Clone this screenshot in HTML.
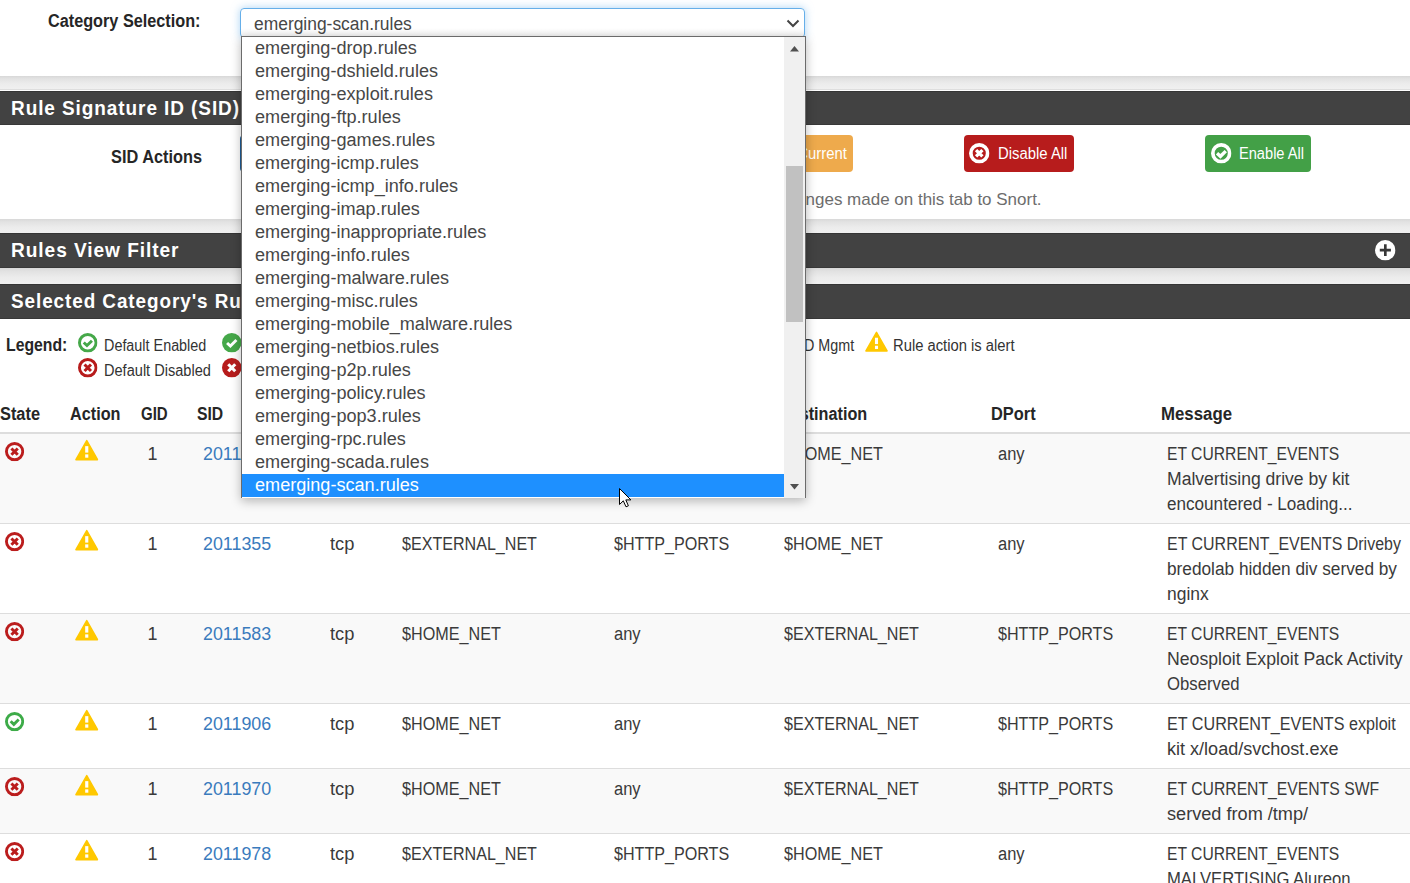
<!DOCTYPE html>
<html><head><meta charset="utf-8">
<style>
*{box-sizing:border-box}
html,body{margin:0;padding:0}
body{width:1410px;height:883px;overflow:hidden;position:relative;background:#fff;font-family:"Liberation Sans",sans-serif}
.a{position:absolute}
.t{position:absolute;white-space:nowrap;transform-origin:0 0;font-family:"Liberation Sans",sans-serif}
.band{position:absolute;left:0;width:1410px;background:linear-gradient(#d8d8d8,#e2e2e2 20%,#ececec 60%,#f0f0f0)}
.ph{position:absolute;left:0;width:1410px;background:#424242;border-top:1px solid #353535;border-bottom:1px solid #383838}
.btn{position:absolute;top:135px;height:37px;border-radius:4px}
svg.i{position:absolute;overflow:visible}
.rowl{position:absolute;left:0;width:1410px;height:1px;background:#ddd}
</style></head><body>
<svg width="0" height="0" style="position:absolute">
<defs>
  <symbol id="cko" viewBox="0 0 20 20"><circle cx="10" cy="10" r="8.5" fill="none" stroke="currentColor" stroke-width="3"/><path d="M5.9 9.7 L9.2 12.9 L14.3 7.9" fill="none" stroke="currentColor" stroke-width="3"/></symbol>
  <symbol id="xo" viewBox="0 0 20 20"><circle cx="10" cy="10" r="8.5" fill="none" stroke="currentColor" stroke-width="3"/><path d="M6.7 6.7 L13.3 13.3 M13.3 6.7 L6.7 13.3" fill="none" stroke="currentColor" stroke-width="3.1"/></symbol>
  <symbol id="bxo" viewBox="0 0 20 20"><circle cx="10" cy="10" r="8.2" fill="none" stroke="#fff" stroke-width="3.6"/><path d="M6.9 6.9 L13.1 13.1 M13.1 6.9 L6.9 13.1" fill="none" stroke="#fff" stroke-width="3.2"/></symbol>
  <symbol id="bcko" viewBox="0 0 20 20"><circle cx="10" cy="10" r="8.2" fill="none" stroke="#fff" stroke-width="3.6"/><path d="M5.9 10.0 L9.2 13.0 L14.4 7.9" fill="none" stroke="#fff" stroke-width="3.3"/></symbol>
  <symbol id="cks" viewBox="0 0 20 20"><circle cx="10" cy="10" r="10" fill="currentColor"/><path d="M5.2 10.2 L8.6 13.4 L14.8 7.2" fill="none" stroke="#fff" stroke-width="3"/></symbol>
  <symbol id="xs" viewBox="0 0 20 20"><circle cx="10" cy="10" r="10" fill="currentColor"/><path d="M6.4 6.4 L13.6 13.6 M13.6 6.4 L6.4 13.6" fill="none" stroke="#fff" stroke-width="3.2"/></symbol>
  <symbol id="warn" viewBox="0 0 24 22"><path d="M12 1.2 L23 20.6 L1 20.6 Z" fill="#ffc800" stroke="#ffc800" stroke-width="1.6" stroke-linejoin="round"/><rect x="10.4" y="6.8" width="3.2" height="6.6" fill="#fff"/><rect x="10.4" y="15.2" width="3.2" height="3.4" fill="#fff"/></symbol>
  <symbol id="plus" viewBox="0 0 21 21"><circle cx="10.5" cy="10.5" r="10.5" fill="#fff"/><path d="M10.6 4.4 V16.4 M4.9 10.4 H16.3" stroke="#383838" stroke-width="2.7"/></symbol>
</defs></svg>

<!-- bands & headings -->
<div class="band" style="top:76px;height:13px"></div>
<div class="a" style="left:0;top:89px;width:1410px;height:1px;background:#dedede"></div>
<div class="ph" style="top:91px;height:34px"></div>
<div class="band" style="top:219px;height:14px"></div>
<div class="ph" style="top:233px;height:35px"></div>
<div class="band" style="top:268px;height:16px"></div>
<div class="ph" style="top:284px;height:35px"></div>

<!-- buttons -->
<div class="btn" style="left:240px;width:150px;background:#1e5f9a"></div>
<div class="btn" style="left:700px;width:153px;background:#eeaa4c"></div>
<div class="btn" style="left:964px;width:110px;background:#b71c1c"></div>
<div class="btn" style="left:1205px;width:106px;background:#43a047"></div>
<svg class="i" style="left:969.4px;top:142.8px;width:20.5px;height:20.5px"><use href="#bxo"/></svg>
<svg class="i" style="left:1210.6px;top:142.8px;width:20.5px;height:20.5px"><use href="#bcko"/></svg>
<svg class="i" style="left:1375px;top:239.6px;width:20.5px;height:20.5px"><use href="#plus"/></svg>

<!-- legend icons -->
<svg class="i" style="left:78px;top:333px;width:19.5px;height:19.5px;color:#45a849"><use href="#cko"/></svg>
<svg class="i" style="left:78px;top:358px;width:19.5px;height:19.5px;color:#b71c1c"><use href="#xo"/></svg>
<svg class="i" style="left:221.6px;top:333px;width:19.5px;height:19.5px;color:#45a849"><use href="#cks"/></svg>
<svg class="i" style="left:221.6px;top:358px;width:19.5px;height:19.5px;color:#b71c1c"><use href="#xs"/></svg>
<svg class="i" style="left:864.5px;top:331px;width:23px;height:21.5px"><use href="#warn"/></svg>

<!-- table -->
<div class="a" style="left:0;top:432px;width:1410px;height:2px;background:#ddd"></div>
<div class="a" style="left:0;top:434px;width:1410px;height:90px;background:#f9f9f9"></div>
<svg class="i" style="left:4.9px;top:441.8px;width:19.2px;height:19.2px;color:#bb1d1d"><use href="#xo"/></svg>
<svg class="i" style="left:75px;top:439.3px;width:23.5px;height:22.5px"><use href="#warn"/></svg>
<div class="a" style="left:0;top:524px;width:1410px;height:90px;background:#fff"></div>
<div class="rowl" style="top:523px"></div>
<svg class="i" style="left:4.9px;top:531.8px;width:19.2px;height:19.2px;color:#bb1d1d"><use href="#xo"/></svg>
<svg class="i" style="left:75px;top:529.3px;width:23.5px;height:22.5px"><use href="#warn"/></svg>
<div class="a" style="left:0;top:614px;width:1410px;height:90px;background:#f9f9f9"></div>
<div class="rowl" style="top:613px"></div>
<svg class="i" style="left:4.9px;top:621.8px;width:19.2px;height:19.2px;color:#bb1d1d"><use href="#xo"/></svg>
<svg class="i" style="left:75px;top:619.3px;width:23.5px;height:22.5px"><use href="#warn"/></svg>
<div class="a" style="left:0;top:704px;width:1410px;height:65px;background:#fff"></div>
<div class="rowl" style="top:703px"></div>
<svg class="i" style="left:4.9px;top:711.8px;width:19.2px;height:19.2px;color:#3dab48"><use href="#cko"/></svg>
<svg class="i" style="left:75px;top:709.3px;width:23.5px;height:22.5px"><use href="#warn"/></svg>
<div class="a" style="left:0;top:769px;width:1410px;height:65px;background:#f9f9f9"></div>
<div class="rowl" style="top:768px"></div>
<svg class="i" style="left:4.9px;top:776.8px;width:19.2px;height:19.2px;color:#bb1d1d"><use href="#xo"/></svg>
<svg class="i" style="left:75px;top:774.3px;width:23.5px;height:22.5px"><use href="#warn"/></svg>
<div class="a" style="left:0;top:834px;width:1410px;height:60px;background:#fff"></div>
<div class="rowl" style="top:833px"></div>
<svg class="i" style="left:4.9px;top:841.8px;width:19.2px;height:19.2px;color:#bb1d1d"><use href="#xo"/></svg>
<svg class="i" style="left:75px;top:839.3px;width:23.5px;height:22.5px"><use href="#warn"/></svg>

<div class="t" style="left:47.60px;top:11.76px;font-size:18px;line-height:18px;font-weight:700;color:#262626;transform:scaleX(0.9021);">Category Selection:</div>
<div class="t" style="left:10.60px;top:97.64px;font-size:20.5px;line-height:20.5px;font-weight:700;color:#fff;letter-spacing:1.0px;transform:scaleX(0.9257);">Rule Signature ID (SID) Management</div>
<div class="t" style="left:111.00px;top:147.76px;font-size:18px;line-height:18px;font-weight:700;color:#262626;transform:scaleX(0.9067);">SID Actions</div>
<div class="t" style="left:997.60px;top:146.15px;font-size:16px;line-height:16px;font-weight:400;color:#fff;transform:scaleX(0.9290);">Disable All</div>
<div class="t" style="left:1239.00px;top:146.15px;font-size:16px;line-height:16px;font-weight:400;color:#fff;transform:scaleX(0.9133);">Enable All</div>
<div class="t" style="left:760.00px;top:146.15px;font-size:16px;line-height:16px;font-weight:400;color:#fff;transform:scaleX(0.9300);">Load Current</div>
<div class="t" style="left:580.03px;top:190.61px;font-size:17px;line-height:17px;font-weight:400;color:#6d6d6d;transform:scaleX(0.9989);">Please remember to save changes made on this tab to Snort.</div>
<div class="t" style="left:10.60px;top:240.14px;font-size:20.5px;line-height:20.5px;font-weight:700;color:#fff;letter-spacing:1.0px;transform:scaleX(0.9325);">Rules View Filter</div>
<div class="t" style="left:10.60px;top:290.64px;font-size:20.5px;line-height:20.5px;font-weight:700;color:#fff;letter-spacing:1.0px;transform:scaleX(0.9222);">Selected Category&#x27;s Rules</div>
<div class="t" style="left:5.70px;top:336.06px;font-size:18px;line-height:18px;font-weight:700;color:#262626;transform:scaleX(0.8757);">Legend:</div>
<div class="t" style="left:103.70px;top:338.09px;font-size:15.6px;line-height:15.6px;font-weight:400;color:#333;transform:scaleX(0.9219);">Default Enabled</div>
<div class="t" style="left:103.70px;top:363.09px;font-size:15.6px;line-height:15.6px;font-weight:400;color:#333;transform:scaleX(0.9343);">Default Disabled</div>
<div class="t" style="left:243.00px;top:338.09px;font-size:15.6px;line-height:15.6px;font-weight:400;color:#333;transform:scaleX(0.9200);">Enabled by user</div>
<div class="t" style="left:243.00px;top:363.09px;font-size:15.6px;line-height:15.6px;font-weight:400;color:#333;transform:scaleX(0.9200);">Disabled by user</div>
<div class="t" style="left:681.76px;top:338.09px;font-size:15.6px;line-height:15.6px;font-weight:400;color:#333;transform:scaleX(0.9200);">Auto-enabled by SID Mgmt</div>
<div class="t" style="left:893.00px;top:338.09px;font-size:15.6px;line-height:15.6px;font-weight:400;color:#333;transform:scaleX(0.9479);">Rule action is alert</div>
<div class="t" style="left:0.00px;top:405.26px;font-size:18px;line-height:18px;font-weight:700;color:#262626;transform:scaleX(0.9088);">State</div>
<div class="t" style="left:69.70px;top:405.26px;font-size:18px;line-height:18px;font-weight:700;color:#262626;transform:scaleX(0.9018);">Action</div>
<div class="t" style="left:141.30px;top:405.26px;font-size:18px;line-height:18px;font-weight:700;color:#262626;transform:scaleX(0.8340);">GID</div>
<div class="t" style="left:196.80px;top:405.26px;font-size:18px;line-height:18px;font-weight:700;color:#262626;transform:scaleX(0.8729);">SID</div>
<div class="t" style="left:330.00px;top:405.26px;font-size:18px;line-height:18px;font-weight:700;color:#262626;transform:scaleX(0.9000);">Proto</div>
<div class="t" style="left:401.00px;top:405.26px;font-size:18px;line-height:18px;font-weight:700;color:#262626;transform:scaleX(0.9000);">Source</div>
<div class="t" style="left:614.00px;top:405.26px;font-size:18px;line-height:18px;font-weight:700;color:#262626;transform:scaleX(0.9000);">SPort</div>
<div class="t" style="left:778.79px;top:405.26px;font-size:18px;line-height:18px;font-weight:700;color:#262626;transform:scaleX(0.9000);">Destination</div>
<div class="t" style="left:991.00px;top:405.26px;font-size:18px;line-height:18px;font-weight:700;color:#262626;transform:scaleX(0.9102);">DPort</div>
<div class="t" style="left:1161.00px;top:405.26px;font-size:18px;line-height:18px;font-weight:700;color:#262626;transform:scaleX(0.9336);">Message</div>
<div class="t" style="left:147.60px;top:445.26px;font-size:18px;line-height:18px;font-weight:400;color:#3a3a3a;">1</div>
<div class="t" style="left:203.40px;top:445.26px;font-size:18px;line-height:18px;font-weight:400;color:#3a7bbd;transform:scaleX(0.9920);">2011347</div>
<div class="t" style="left:330.00px;top:445.26px;font-size:18px;line-height:18px;font-weight:400;color:#3a3a3a;transform:scaleX(1.0167);">tcp</div>
<div class="t" style="left:401.60px;top:445.26px;font-size:18px;line-height:18px;font-weight:400;color:#3a3a3a;transform:scaleX(0.8934);">$EXTERNAL_NET</div>
<div class="t" style="left:614.40px;top:445.26px;font-size:18px;line-height:18px;font-weight:400;color:#3a3a3a;transform:scaleX(0.8951);">$HTTP_PORTS</div>
<div class="t" style="left:784.40px;top:445.26px;font-size:18px;line-height:18px;font-weight:400;color:#3a3a3a;transform:scaleX(0.8982);">$HOME_NET</div>
<div class="t" style="left:997.60px;top:445.26px;font-size:18px;line-height:18px;font-weight:400;color:#3a3a3a;transform:scaleX(0.9172);">any</div>
<div class="t" style="left:1167.30px;top:445.26px;font-size:18px;line-height:18px;font-weight:400;color:#3a3a3a;transform:scaleX(0.8715);">ET CURRENT_EVENTS</div>
<div class="t" style="left:1167.30px;top:470.26px;font-size:18px;line-height:18px;font-weight:400;color:#3a3a3a;transform:scaleX(0.9756);">Malvertising drive by kit</div>
<div class="t" style="left:1167.30px;top:495.26px;font-size:18px;line-height:18px;font-weight:400;color:#3a3a3a;transform:scaleX(0.9505);">encountered - Loading...</div>
<div class="t" style="left:147.60px;top:535.26px;font-size:18px;line-height:18px;font-weight:400;color:#3a3a3a;">1</div>
<div class="t" style="left:203.40px;top:535.26px;font-size:18px;line-height:18px;font-weight:400;color:#3a7bbd;transform:scaleX(0.9920);">2011355</div>
<div class="t" style="left:330.00px;top:535.26px;font-size:18px;line-height:18px;font-weight:400;color:#3a3a3a;transform:scaleX(1.0167);">tcp</div>
<div class="t" style="left:401.60px;top:535.26px;font-size:18px;line-height:18px;font-weight:400;color:#3a3a3a;transform:scaleX(0.8934);">$EXTERNAL_NET</div>
<div class="t" style="left:614.40px;top:535.26px;font-size:18px;line-height:18px;font-weight:400;color:#3a3a3a;transform:scaleX(0.8951);">$HTTP_PORTS</div>
<div class="t" style="left:784.40px;top:535.26px;font-size:18px;line-height:18px;font-weight:400;color:#3a3a3a;transform:scaleX(0.8982);">$HOME_NET</div>
<div class="t" style="left:997.60px;top:535.26px;font-size:18px;line-height:18px;font-weight:400;color:#3a3a3a;transform:scaleX(0.9172);">any</div>
<div class="t" style="left:1167.30px;top:535.26px;font-size:18px;line-height:18px;font-weight:400;color:#3a3a3a;transform:scaleX(0.8869);">ET CURRENT_EVENTS Driveby</div>
<div class="t" style="left:1167.30px;top:560.26px;font-size:18px;line-height:18px;font-weight:400;color:#3a3a3a;transform:scaleX(0.9576);">bredolab hidden div served by</div>
<div class="t" style="left:1167.30px;top:585.26px;font-size:18px;line-height:18px;font-weight:400;color:#3a3a3a;transform:scaleX(0.9691);">nginx</div>
<div class="t" style="left:147.60px;top:625.26px;font-size:18px;line-height:18px;font-weight:400;color:#3a3a3a;">1</div>
<div class="t" style="left:203.40px;top:625.26px;font-size:18px;line-height:18px;font-weight:400;color:#3a7bbd;transform:scaleX(0.9920);">2011583</div>
<div class="t" style="left:330.00px;top:625.26px;font-size:18px;line-height:18px;font-weight:400;color:#3a3a3a;transform:scaleX(1.0167);">tcp</div>
<div class="t" style="left:401.60px;top:625.26px;font-size:18px;line-height:18px;font-weight:400;color:#3a3a3a;transform:scaleX(0.8982);">$HOME_NET</div>
<div class="t" style="left:614.40px;top:625.26px;font-size:18px;line-height:18px;font-weight:400;color:#3a3a3a;transform:scaleX(0.9172);">any</div>
<div class="t" style="left:784.40px;top:625.26px;font-size:18px;line-height:18px;font-weight:400;color:#3a3a3a;transform:scaleX(0.8934);">$EXTERNAL_NET</div>
<div class="t" style="left:997.60px;top:625.26px;font-size:18px;line-height:18px;font-weight:400;color:#3a3a3a;transform:scaleX(0.8951);">$HTTP_PORTS</div>
<div class="t" style="left:1167.30px;top:625.26px;font-size:18px;line-height:18px;font-weight:400;color:#3a3a3a;transform:scaleX(0.8715);">ET CURRENT_EVENTS</div>
<div class="t" style="left:1167.30px;top:650.26px;font-size:18px;line-height:18px;font-weight:400;color:#3a3a3a;transform:scaleX(0.9816);">Neosploit Exploit Pack Activity</div>
<div class="t" style="left:1167.30px;top:675.26px;font-size:18px;line-height:18px;font-weight:400;color:#3a3a3a;transform:scaleX(0.9289);">Observed</div>
<div class="t" style="left:147.60px;top:715.26px;font-size:18px;line-height:18px;font-weight:400;color:#3a3a3a;">1</div>
<div class="t" style="left:203.40px;top:715.26px;font-size:18px;line-height:18px;font-weight:400;color:#3a7bbd;transform:scaleX(0.9920);">2011906</div>
<div class="t" style="left:330.00px;top:715.26px;font-size:18px;line-height:18px;font-weight:400;color:#3a3a3a;transform:scaleX(1.0167);">tcp</div>
<div class="t" style="left:401.60px;top:715.26px;font-size:18px;line-height:18px;font-weight:400;color:#3a3a3a;transform:scaleX(0.8982);">$HOME_NET</div>
<div class="t" style="left:614.40px;top:715.26px;font-size:18px;line-height:18px;font-weight:400;color:#3a3a3a;transform:scaleX(0.9172);">any</div>
<div class="t" style="left:784.40px;top:715.26px;font-size:18px;line-height:18px;font-weight:400;color:#3a3a3a;transform:scaleX(0.8934);">$EXTERNAL_NET</div>
<div class="t" style="left:997.60px;top:715.26px;font-size:18px;line-height:18px;font-weight:400;color:#3a3a3a;transform:scaleX(0.8951);">$HTTP_PORTS</div>
<div class="t" style="left:1167.30px;top:715.26px;font-size:18px;line-height:18px;font-weight:400;color:#3a3a3a;transform:scaleX(0.8978);">ET CURRENT_EVENTS exploit</div>
<div class="t" style="left:1167.30px;top:740.26px;font-size:18px;line-height:18px;font-weight:400;color:#3a3a3a;transform:scaleX(1.0024);">kit x/load/svchost.exe</div>
<div class="t" style="left:147.60px;top:780.26px;font-size:18px;line-height:18px;font-weight:400;color:#3a3a3a;">1</div>
<div class="t" style="left:203.40px;top:780.26px;font-size:18px;line-height:18px;font-weight:400;color:#3a7bbd;transform:scaleX(0.9920);">2011970</div>
<div class="t" style="left:330.00px;top:780.26px;font-size:18px;line-height:18px;font-weight:400;color:#3a3a3a;transform:scaleX(1.0167);">tcp</div>
<div class="t" style="left:401.60px;top:780.26px;font-size:18px;line-height:18px;font-weight:400;color:#3a3a3a;transform:scaleX(0.8982);">$HOME_NET</div>
<div class="t" style="left:614.40px;top:780.26px;font-size:18px;line-height:18px;font-weight:400;color:#3a3a3a;transform:scaleX(0.9172);">any</div>
<div class="t" style="left:784.40px;top:780.26px;font-size:18px;line-height:18px;font-weight:400;color:#3a3a3a;transform:scaleX(0.8934);">$EXTERNAL_NET</div>
<div class="t" style="left:997.60px;top:780.26px;font-size:18px;line-height:18px;font-weight:400;color:#3a3a3a;transform:scaleX(0.8951);">$HTTP_PORTS</div>
<div class="t" style="left:1167.30px;top:780.26px;font-size:18px;line-height:18px;font-weight:400;color:#3a3a3a;transform:scaleX(0.8739);">ET CURRENT_EVENTS SWF</div>
<div class="t" style="left:1167.30px;top:805.26px;font-size:18px;line-height:18px;font-weight:400;color:#3a3a3a;transform:scaleX(1.0075);">served from /tmp/</div>
<div class="t" style="left:147.60px;top:845.26px;font-size:18px;line-height:18px;font-weight:400;color:#3a3a3a;">1</div>
<div class="t" style="left:203.40px;top:845.26px;font-size:18px;line-height:18px;font-weight:400;color:#3a7bbd;transform:scaleX(0.9920);">2011978</div>
<div class="t" style="left:330.00px;top:845.26px;font-size:18px;line-height:18px;font-weight:400;color:#3a3a3a;transform:scaleX(1.0167);">tcp</div>
<div class="t" style="left:401.60px;top:845.26px;font-size:18px;line-height:18px;font-weight:400;color:#3a3a3a;transform:scaleX(0.8934);">$EXTERNAL_NET</div>
<div class="t" style="left:614.40px;top:845.26px;font-size:18px;line-height:18px;font-weight:400;color:#3a3a3a;transform:scaleX(0.8951);">$HTTP_PORTS</div>
<div class="t" style="left:784.40px;top:845.26px;font-size:18px;line-height:18px;font-weight:400;color:#3a3a3a;transform:scaleX(0.8982);">$HOME_NET</div>
<div class="t" style="left:997.60px;top:845.26px;font-size:18px;line-height:18px;font-weight:400;color:#3a3a3a;transform:scaleX(0.9172);">any</div>
<div class="t" style="left:1167.30px;top:845.26px;font-size:18px;line-height:18px;font-weight:400;color:#3a3a3a;transform:scaleX(0.8715);">ET CURRENT_EVENTS</div>
<div class="t" style="left:1167.30px;top:870.26px;font-size:18px;line-height:18px;font-weight:400;color:#3a3a3a;transform:scaleX(0.9248);">MALVERTISING Alureon</div>
<div class="t" style="left:1167.30px;top:895.26px;font-size:18px;line-height:18px;font-weight:400;color:#3a3a3a;transform:scaleX(0.8900);">JavaScript IFRAME Redirect</div>

<!-- select -->
<div class="a" style="left:240px;top:8px;width:565px;height:29.5px;border:1.3px solid #66afe9;border-radius:4px;background:linear-gradient(#fff 70%,#f2f2f2);box-shadow:0 0 8px rgba(102,175,233,.55)"></div>
<svg class="i" style="left:786px;top:19px;width:14px;height:9px"><path d="M1.5 1.5 L7 7 L12.5 1.5" fill="none" stroke="#444" stroke-width="2"/></svg>
<div class="t" style="left:254.10px;top:15.16px;font-size:18px;line-height:18px;font-weight:400;color:#474747;transform:scaleX(0.9676);">emerging-scan.rules</div>

<!-- popup -->
<div class="a" style="left:241px;top:36px;width:565px;height:462px;background:#fff;border:1px solid #6b6b6b;border-bottom:none;box-shadow:0 3px 10px rgba(0,0,0,.28)"></div>
<div class="a" style="left:784px;top:37px;width:21px;height:461px;background:#f0f0f0"></div>
<div class="a" style="left:786px;top:166px;width:17px;height:156px;background:#c1c1c1"></div>
<svg class="i" style="left:790px;top:45.5px;width:9px;height:6px"><path d="M0 5.5 L4.5 0 L9 5.5 Z" fill="#505050"/></svg>
<svg class="i" style="left:790px;top:483.5px;width:9px;height:6px"><path d="M0 0 L4.5 5.5 L9 0 Z" fill="#505050"/></svg>
<div class="a" style="left:242px;top:474px;width:542px;height:23px;background:#1e90ff"></div>
<div class="t" style="left:255.00px;top:39.06px;font-size:18px;line-height:18px;font-weight:400;color:#474747;transform:scaleX(1.0050);">emerging-drop.rules</div>
<div class="t" style="left:255.00px;top:62.06px;font-size:18px;line-height:18px;font-weight:400;color:#474747;transform:scaleX(1.0050);">emerging-dshield.rules</div>
<div class="t" style="left:255.00px;top:85.06px;font-size:18px;line-height:18px;font-weight:400;color:#474747;transform:scaleX(1.0050);">emerging-exploit.rules</div>
<div class="t" style="left:255.00px;top:108.06px;font-size:18px;line-height:18px;font-weight:400;color:#474747;transform:scaleX(1.0050);">emerging-ftp.rules</div>
<div class="t" style="left:255.00px;top:131.06px;font-size:18px;line-height:18px;font-weight:400;color:#474747;transform:scaleX(1.0050);">emerging-games.rules</div>
<div class="t" style="left:255.00px;top:154.06px;font-size:18px;line-height:18px;font-weight:400;color:#474747;transform:scaleX(1.0050);">emerging-icmp.rules</div>
<div class="t" style="left:255.00px;top:177.06px;font-size:18px;line-height:18px;font-weight:400;color:#474747;transform:scaleX(1.0050);">emerging-icmp_info.rules</div>
<div class="t" style="left:255.00px;top:200.06px;font-size:18px;line-height:18px;font-weight:400;color:#474747;transform:scaleX(1.0050);">emerging-imap.rules</div>
<div class="t" style="left:255.00px;top:223.06px;font-size:18px;line-height:18px;font-weight:400;color:#474747;transform:scaleX(1.0050);">emerging-inappropriate.rules</div>
<div class="t" style="left:255.00px;top:246.06px;font-size:18px;line-height:18px;font-weight:400;color:#474747;transform:scaleX(1.0050);">emerging-info.rules</div>
<div class="t" style="left:255.00px;top:269.06px;font-size:18px;line-height:18px;font-weight:400;color:#474747;transform:scaleX(1.0050);">emerging-malware.rules</div>
<div class="t" style="left:255.00px;top:292.06px;font-size:18px;line-height:18px;font-weight:400;color:#474747;transform:scaleX(1.0050);">emerging-misc.rules</div>
<div class="t" style="left:255.00px;top:315.06px;font-size:18px;line-height:18px;font-weight:400;color:#474747;transform:scaleX(1.0050);">emerging-mobile_malware.rules</div>
<div class="t" style="left:255.00px;top:338.06px;font-size:18px;line-height:18px;font-weight:400;color:#474747;transform:scaleX(1.0050);">emerging-netbios.rules</div>
<div class="t" style="left:255.00px;top:361.06px;font-size:18px;line-height:18px;font-weight:400;color:#474747;transform:scaleX(1.0050);">emerging-p2p.rules</div>
<div class="t" style="left:255.00px;top:384.06px;font-size:18px;line-height:18px;font-weight:400;color:#474747;transform:scaleX(1.0050);">emerging-policy.rules</div>
<div class="t" style="left:255.00px;top:407.06px;font-size:18px;line-height:18px;font-weight:400;color:#474747;transform:scaleX(1.0050);">emerging-pop3.rules</div>
<div class="t" style="left:255.00px;top:430.06px;font-size:18px;line-height:18px;font-weight:400;color:#474747;transform:scaleX(1.0050);">emerging-rpc.rules</div>
<div class="t" style="left:255.00px;top:453.06px;font-size:18px;line-height:18px;font-weight:400;color:#474747;transform:scaleX(1.0050);">emerging-scada.rules</div>
<div class="t" style="left:255.00px;top:476.06px;font-size:18px;line-height:18px;font-weight:400;color:#fff;transform:scaleX(1.0050);">emerging-scan.rules</div>

<!-- cursor -->
<svg class="i" style="left:619px;top:488px;width:13px;height:20px"><path d="M0.5 0.5 L0.5 16.5 L4.3 12.8 L7 18.8 L9.4 17.8 L6.8 11.9 L11.9 11.9 Z" fill="#fff" stroke="#000" stroke-width="1" stroke-linejoin="round"/></svg>
</body></html>
